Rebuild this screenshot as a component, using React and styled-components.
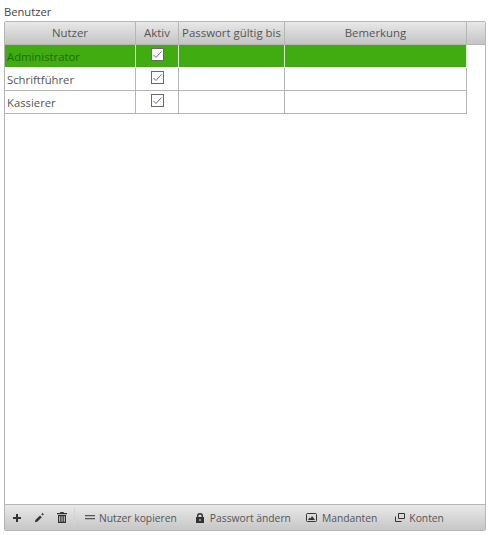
import React from 'react'
import styled, { createGlobalStyle } from 'styled-components'

const Global = createGlobalStyle`
  html, body { margin: 0; padding: 0; background: #fff; }
  body { font-family: "Open Sans", "Noto Sans", "Liberation Sans", sans-serif; font-size: 12px; color: #555; }
`

const Page = styled.div`
  width: 490px;
  height: 535px;
  box-sizing: border-box;
  padding: 4px;
  display: flex;
  flex-direction: column;
`

const Title = styled.div`
  height: 17px;
  line-height: 16px;
  font-size: 11.2px;
  color: #444;
`

const Panel = styled.div`
  flex: 1;
  display: flex;
  flex-direction: column;
  border: 1px solid #b5b5b5;
  border-radius: 2px;
  width: 482px;
  box-sizing: border-box;
`

const Body = styled.div`
  flex: 1;
`

const HeadRow = styled.div`
  display: grid;
  grid-template-columns: 131px 43px 106px 182px 1fr;
  height: 23px;
  box-sizing: border-box;
  background: linear-gradient(#e8e8e8, #c4c4c4);
  border-bottom: 1px solid #b5b5b5;
`

const HeadCell = styled.div`
  height: 22px;
  border-right: ${p => (p.$last ? 'none' : '1px solid #b5b5b5')};
  text-align: center;
  line-height: 22px;
  font-size: 11.4px;
  color: #555;
  white-space: nowrap;
  overflow: hidden;
`

const DataRow = styled.div`
  display: grid;
  grid-template-columns: 131px 43px 106px 182px;
  grid-template-rows: 22px;
  width: 462px;
  height: 23px;
  box-sizing: border-box;
  background: ${p => (p.$selected ? '#41ab12' : '#fff')};
  border-bottom: 1px solid ${p => (p.$selected ? '#fff' : '#b5b5b5')};
`

const Cell = styled.div`
  height: 22px;
  border-right: 1px solid ${p => (p.$selected ? '#d8efcc' : '#b5b5b5')};
  line-height: 24px;
  padding-left: 2px;
  font-size: 11.3px;
  color: ${p => (p.$selected ? '#1f6b0b' : '#555')};
  white-space: nowrap;
  overflow: hidden;
`

const CheckCell = styled(Cell)`
  display: flex;
  align-items: flex-start;
  padding: 3px 0 0 15px;
  box-sizing: border-box;
`

const CheckBox = styled.span`
  width: 13px;
  height: 13px;
  box-sizing: border-box;
  border: 1px solid #6a6a6a;
  background: #fff;
  display: flex;
  align-items: center;
  justify-content: center;
`

const Toolbar = styled.div`
  height: 26px;
  box-sizing: border-box;
  border-top: 1px solid #b5b5b5;
  background: linear-gradient(#e9e9e9, #c6c6c6);
  display: flex;
  align-items: center;
  padding-left: 7px;
`

const Tool = styled.div`
  display: flex;
  align-items: center;
  gap: ${p => p.$gap || 4}px;
  margin-right: ${p => p.$mr || 0}px;
  font-size: 10.3px;
  color: #555;
  white-space: nowrap;
`

const Separator = styled.div`
  width: 1px;
  height: 20px;
  background: #d2d2d2;
  margin: 0 10px 0 7px;
`

const Check = () => (
  <CheckBox>
    <svg width="11" height="11" viewBox="0 0 11 11">
      <path d="M1.5 6 L4 8.5 L9.5 2.5" fill="none" stroke="#5b6f88" strokeWidth="1" />
    </svg>
  </CheckBox>
)

const Plus = () => (
  <svg width="10" height="10" viewBox="0 0 10 10">
    <path d="M4 1h2v3h3v2H6v3H4V6H1V4h3z" fill="#333" />
  </svg>
)

const Pen = () => (
  <svg width="11" height="11" viewBox="0 0 11 11">
    <path d="M1 10.2l.4-2.2L6 3.4 7.8 5.2 3.2 9.8z" fill="#333" />
    <path d="M8.6 .6l.5 1.1 1.1.5-1.1.5-.5 1.1-.5-1.1-1.1-.5 1.1-.5z" fill="#333" />
  </svg>
)

const Trash = () => (
  <svg width="10" height="11" viewBox="0 0 10 11">
    <path d="M3.5 0h3l.5 1h3v1.2H0V1h3z" fill="#333" />
    <path d="M1 3h8v8H1zm1.2 1.2v5.6h1V4.2zm2.3 0v5.6h1V4.2zm2.3 0v5.6h1V4.2z" fill="#333" fillRule="evenodd" />
  </svg>
)

const Equals = () => (
  <svg width="10" height="5" viewBox="0 0 10 5">
    <path d="M0 0h10v1.3H0zM0 3h10v1.3H0z" fill="#555" />
  </svg>
)

const Lock = () => (
  <svg width="8" height="10" viewBox="0 0 8 10">
    <path d="M1 4V3a3 3 0 0 1 6 0v1h1v6H0V4zm1.4 0h3.2V3a1.6 1.6 0 0 0-3.2 0zM3.4 6v2h1.2V6z" fill="#333" fillRule="evenodd" />
  </svg>
)

const Picture = () => (
  <svg width="11" height="9" viewBox="0 0 11 9">
    <rect x=".5" y=".5" width="10" height="8" rx="1" fill="none" stroke="#333" />
    <path d="M2 7l1.6-2.4 1 1L6 3l3 4z" fill="#333" />
  </svg>
)

const Windows = () => (
  <svg width="10" height="9" viewBox="0 0 10 9">
    <path d="M3.5 .5h6v5h-6z" fill="none" stroke="#333" />
    <path d="M.5 3.5v5h6" fill="none" stroke="#333" />
  </svg>
)

const rows = [
  { name: 'Administrator', selected: true },
  { name: 'Schriftführer' },
  { name: 'Kassierer' },
]

export default function App() {
  return (
    <Page>
      <Global />
      <Title>Benutzer</Title>
      <Panel>
        <HeadRow>
          <HeadCell>Nutzer</HeadCell>
          <HeadCell>Aktiv</HeadCell>
          <HeadCell>Passwort gültig bis</HeadCell>
          <HeadCell>Bemerkung</HeadCell>
          <HeadCell $last />
        </HeadRow>
        <Body>
          {rows.map(r => (
            <DataRow key={r.name} $selected={r.selected}>
              <Cell $selected={r.selected}>{r.name}</Cell>
              <CheckCell $selected={r.selected}><Check /></CheckCell>
              <Cell $selected={r.selected} />
              <Cell $selected={r.selected} />
            </DataRow>
          ))}
        </Body>
        <Toolbar>
          <Tool $mr={12}><Plus /></Tool>
          <Tool $mr={12}><Pen /></Tool>
          <Tool><Trash /></Tool>
          <Separator />
          <Tool $gap={4} $mr={19}><Equals />Nutzer kopieren</Tool>
          <Tool $gap={6} $mr={15}><Lock />Passwort ändern</Tool>
          <Tool $gap={5} $mr={18}><Picture />Mandanten</Tool>
          <Tool $gap={4}><Windows />Konten</Tool>
        </Toolbar>
      </Panel>
    </Page>
  )
}
